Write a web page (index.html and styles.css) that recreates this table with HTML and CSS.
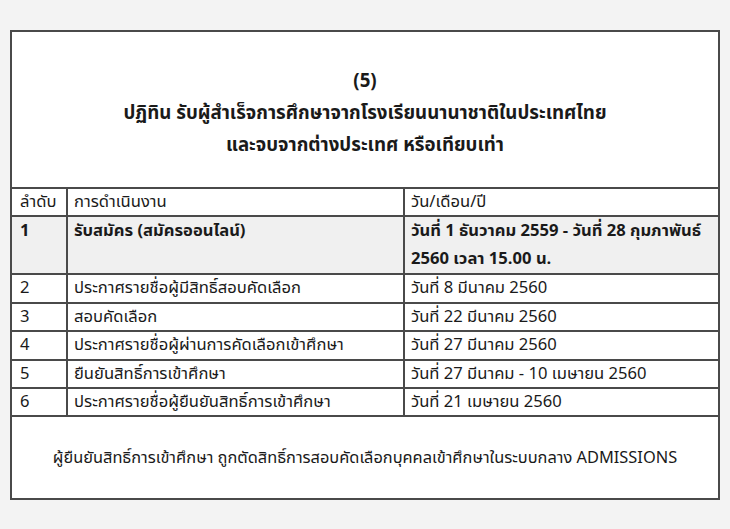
FILE: index.html
```html
<!DOCTYPE html>
<html lang="th">
<head>
<meta charset="utf-8">
<link rel="stylesheet" href="styles.css">
</head>
<body>
<div class="sheet">
  <div class="head">
    <div class="num">(5)</div>
    <div class="title">ปฏิทิน รับผู้สำเร็จการศึกษาจากโรงเรียนนานาชาติในประเทศไทย</div>
    <div class="title">และจบจากต่างประเทศ หรือเทียบเท่า</div>
  </div>
  <table class="sched">
    <colgroup><col class="c1"><col class="c2"><col class="c3"></colgroup>
    <tr class="thead"><td>ลำดับ</td><td>การดำเนินงาน</td><td>วัน/เดือน/ปี</td></tr>
    <tr class="hl"><td>1</td><td>รับสมัคร (สมัครออนไลน์)</td><td>วันที่ 1 ธันวาคม 2559 - วันที่ 28 กุมภาพันธ์ 2560 เวลา 15.00 น.</td></tr>
    <tr><td>2</td><td>ประกาศรายชื่อผู้มีสิทธิ์สอบคัดเลือก</td><td>วันที่ 8 มีนาคม 2560</td></tr>
    <tr><td>3</td><td>สอบคัดเลือก</td><td>วันที่ 22 มีนาคม 2560</td></tr>
    <tr><td>4</td><td>ประกาศรายชื่อผู้ผ่านการคัดเลือกเข้าศึกษา</td><td>วันที่ 27 มีนาคม 2560</td></tr>
    <tr><td>5</td><td>ยืนยันสิทธิ์การเข้าศึกษา</td><td>วันที่ 27 มีนาคม - 10 เมษายน 2560</td></tr>
    <tr><td>6</td><td>ประกาศรายชื่อผู้ยืนยันสิทธิ์การเข้าศึกษา</td><td>วันที่ 21 เมษายน 2560</td></tr>
  </table>
  <div class="foot">ผู้ยืนยันสิทธิ์การเข้าศึกษา ถูกตัดสิทธิ์การสอบคัดเลือกบุคคลเข้าศึกษาในระบบกลาง ADMISSIONS</div>
</div>
</body>
</html>
```
FILE: styles.css
```css
html, body { margin: 0; padding: 0; }
body {
  background: #f3f3f3;
  font-family: "Noto Sans Thai", "Noto Sans", "DejaVu Sans", sans-serif;
  color: #1a1a1a;
  width: 730px;
  height: 529px;
  overflow: hidden;
}
.sheet {
  margin: 30px 0 0 10px;
  width: 706px;
  border: 2px solid #4a4a4a;
  background: #fff;
}
.head {
  height: 155px;
  display: flex;
  flex-direction: column;
  align-items: center;
  justify-content: center;
  font-weight: bold;
  font-size: 18.7px;
  line-height: 32px;
  padding-top: 6px;
  box-sizing: border-box;
}
.sched {
  width: 100%;
  border-collapse: collapse;
  font-size: 16.6px;
}
.sched col.c1 { width: 55px; }
.sched col.c2 { width: 337px; }
.sched td {
  border-top: 2px solid #4a4a4a;
  border-left: 2px solid #4a4a4a;
  padding: 0 6px;
  height: 26.4px;
  line-height: 26.4px;
  vertical-align: top;
  white-space: nowrap;
}
.sched tr.hl td { white-space: normal; }
.sched td:first-child { border-left: none; padding-left: 8px; }
.sched tr.hl td { background: #f0f0f0; font-weight: bold; line-height: 28px; height: 55px; }
.sched tr:last-child td { border-bottom: 2px solid #4a4a4a; }
.foot {
  height: 81px;
  display: flex;
  align-items: center;
  justify-content: center;
  font-size: 16.4px;
}
```
